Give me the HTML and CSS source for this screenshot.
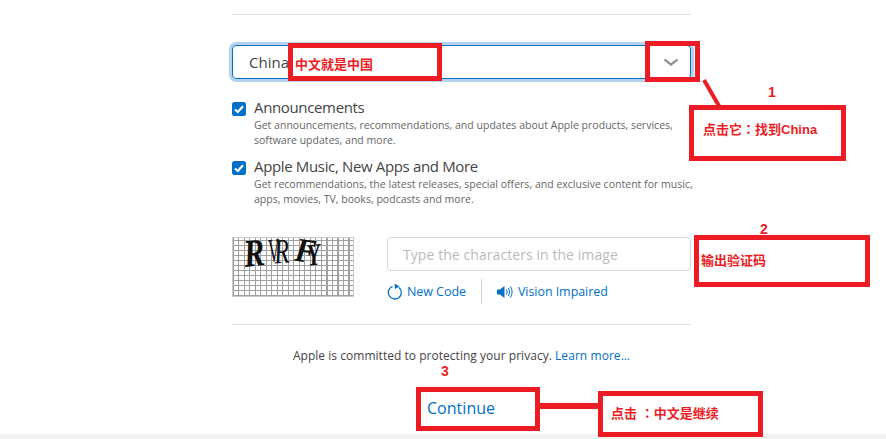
FILE: index.html
```html
<!DOCTYPE html>
<html lang="en">
<head>
<meta charset="utf-8">
<title>Apple ID preferences</title>
<link rel="stylesheet" href="styles.css">
</head>
<body>
<main class="form">
  <hr class="rule rule-top">
  <div class="select">
    <span>China</span>
    <svg class="chevron" width="16" height="9" viewBox="0 0 16 9"><path d="M1.500 1.500 8 6.500l6.500-5" fill="none" stroke="#888" stroke-width="2.200"/></svg>
  </div>
  <div class="option option-first">
    <svg class="check" width="14" height="14" viewBox="0 0 14 14"><rect width="14" height="14" rx="2.500" fill="#0070c9"/><path d="M3 7.500 5.800 10 11 4.200" fill="none" stroke="#fff" stroke-width="2.200"/></svg>
    <div>
      <div class="option-title">Announcements</div>
      <p class="option-text">Get announcements, recommendations, and updates about Apple products, services, software updates, and more.</p>
    </div>
  </div>
  <div class="option option-second">
    <svg class="check" width="14" height="14" viewBox="0 0 14 14"><rect width="14" height="14" rx="2.500" fill="#0070c9"/><path d="M3 7.500 5.800 10 11 4.200" fill="none" stroke="#fff" stroke-width="2.200"/></svg>
    <div>
      <div class="option-title">Apple Music, New Apps and More</div>
      <p class="option-text">Get recommendations, the latest releases, special offers, and exclusive content for music, apps, movies, TV, books, podcasts and more.</p>
    </div>
  </div>
  <div class="captcha-row">
    <div class="captcha" aria-label="captcha image">
      <span class="c1">R</span><span class="c2">V</span><span class="c3">R</span><span class="c4">F</span><span class="c5">Y</span>
    </div>
    <div class="captcha-side">
      <div class="input">Type the characters in the image</div>
      <div class="captcha-links">
        <a class="link new-code">
          <svg width="16" height="17" viewBox="0 0 16 17"><path d="M5.500 3.400A6.500 6.500 0 1 0 12 4.500" fill="none" stroke="#0070c9" stroke-width="1.300"/><path d="M7.500 0.500 12.500 3.500 8 6Z" fill="#0070c9"/></svg>
          New Code
        </a>
        <span class="divider"></span>
        <a class="link vision">
          <svg width="17" height="14" viewBox="0 0 17 14"><path d="M0 4.500h3L7.500 1v12L3 9.500H0Z" fill="#0070c9"/><path d="M9.500 4.500q1.500 2.500 0 5M11.500 3q2.300 4 0 8M13.500 1.500q3.200 5.500 0 11" fill="none" stroke="#0070c9" stroke-width="1"/></svg>
          Vision Impaired
        </a>
      </div>
    </div>
  </div>
  <hr class="rule rule-bottom">
  <p class="privacy">Apple is committed to protecting your privacy. <a class="link">Learn more…</a></p>
  <div class="continue">Continue</div>
</main>
<div class="footer-strip"></div>

<div class="mark mark-name"><span>中文就是中国</span></div>
<div class="mark mark-chevron"></div>
<svg class="leader" width="20" height="30" viewBox="0 0 20 30"><path d="M2 1 17 27" stroke="#ed1c24" stroke-width="4"/></svg>
<div class="num num-1">1</div>
<div class="mark mark-find"><span>点击它<i class="colon">：</i>找到China</span></div>
<div class="num num-2">2</div>
<div class="mark mark-code"><span>输出验证码</span></div>
<div class="num num-3">3</div>
<div class="mark mark-continue"></div>
<div class="leader-flat"></div>
<div class="mark mark-click"><span>点击 <i class="colon">：</i>中文是继续</span></div>
</body>
</html>
```
FILE: styles.css
```css
* { box-sizing: border-box; }
html, body { margin: 0; height: 439px; overflow: hidden; background: #fff; }
body { font-family: "Open Sans", "Noto Sans CJK SC", sans-serif; color: #333; position: relative; }

.form { width: 459px; margin-left: 232px; padding-top: 14px; }
.rule { border: 0; height: 1px; background: #e3e3e3; margin: 0; }

.select {
  margin-top: 30px; height: 34px; padding: 0 11px 0 16px;
  display: flex; align-items: center; justify-content: space-between;
  border: 1px solid #0070c9; border-radius: 4px; box-shadow: 0 0 0 3px #b5d3ee;
  font-size: 15px; color: #444;
}

.option { display: flex; gap: 8px; }
.option-first { margin-top: 20px; }
.option-second { margin-top: 10px; }
.check { flex: none; margin-top: 3px; }
.option-title { margin-top: -1px; font-size: 15px; line-height: 19px; letter-spacing: -0.35px; color: #444; }
.option-text { margin: 1px -4px 0 0; font-size: 10.500px; line-height: 15px; letter-spacing: 0.02px; color: #666; }

.captcha-row { display: flex; gap: 33px; margin-top: 30px; }
.captcha {
  width: 122px; height: 60px; flex: none; position: relative;
  border: 1px solid #c8c8c8;
  background-color: #fff;
  background-image:
    repeating-linear-gradient(90deg, #a0a0a0 0 1px, transparent 1px 5.500px),
    repeating-linear-gradient(0deg, #a0a0a0 0 1px, transparent 1px 5px);
  font-family: "Liberation Serif", serif; color: #111; font-weight: 700; font-style: italic;
}
.captcha span { position: absolute; line-height: .7; }
.c1 { left: 8px; top: 1px; font-size: 39px; transform: rotate(-6deg) scaleX(.8); }
.c2 { left: 30px; top: 1px; font-size: 34px; font-weight: 400; transform: rotate(-6deg) scaleX(.5); }
.c3 { left: 38px; top: 2px; font-size: 35px; font-weight: 400; transform: rotate(-4deg) scaleX(.7); }
.c4 { left: 61px; top: 1px; font-size: 34px; transform: rotate(8deg) scaleX(.9); }
.c5 { left: 71px; top: 6px; font-size: 31px; transform: rotate(-6deg) scaleX(.7); }

.captcha-side { flex: 1; min-width: 0; }
.input {
  height: 34px; padding-left: 15px; display: flex; align-items: center;
  border: 1px solid #d6d6d6; border-radius: 4px;
  font-size: 14px; letter-spacing: 0.07px; color: #bbb;
}
.captcha-links { display: flex; align-items: center; margin-top: 8px; height: 25px; }
.link { color: #0070c9; font-size: 12.500px; letter-spacing: -0.06px; }
.new-code, .vision { display: flex; align-items: center; gap: 4px; }
.divider { width: 1px; height: 25px; background: #d6d6d6; margin: 0 15px 0 15px; }

.rule-bottom { margin-top: 20px; }
.privacy { margin: 22px 0 0; text-align: center; font-size: 12px; line-height: 17px; letter-spacing: 0.03px; color: #444; }
.privacy .link { font-size: 12px; letter-spacing: 0.06px; }
.continue { margin: 33px 0 0 195px; font-size: 16px; line-height: 22px; letter-spacing: 0.03px; color: #0070c9; }

.footer-strip { position: absolute; left: 0; right: 0; top: 434px; height: 5px; background: #f2f2f2; }

.mark { position: absolute; border: 5px solid #ed1c24; display: flex; align-items: center; background: transparent; }
.mark span, .num { color: #ed1c24; font-weight: 700; font-size: 13px; font-family: "Liberation Sans", "Noto Sans CJK SC", sans-serif; }
.colon { font-style: normal; font-family: "Noto Sans CJK TC", sans-serif; }
.mark-name { left: 288px; top: 43px; width: 154px; height: 38px; background: #fff; padding: 2px 0 0 2px; }
.mark-chevron { left: 645px; top: 41px; width: 55px; height: 41px; }
.mark-find { left: 689px; top: 105px; width: 157px; height: 56px; padding: 0 0 10px 9px; }
.mark-code { left: 694px; top: 235px; width: 176px; height: 52px; padding: 0 0 4px 2px; }
.mark-continue { left: 416px; top: 387px; width: 124px; height: 44px; }
.mark-click { left: 598px; top: 391px; width: 165px; height: 46px; padding: 0 0 4px 8px; background: #fff; }
.leader { position: absolute; left: 702px; top: 79px; }
.leader-flat { position: absolute; left: 540px; top: 403px; width: 58px; height: 6px; background: #ed1c24; }
.num { position: absolute; font-size: 14px; line-height: 14px; }
.num-1 { left: 768px; top: 85px; }
.num-2 { left: 760px; top: 222px; }
.num-3 { left: 441px; top: 364px; }
```
